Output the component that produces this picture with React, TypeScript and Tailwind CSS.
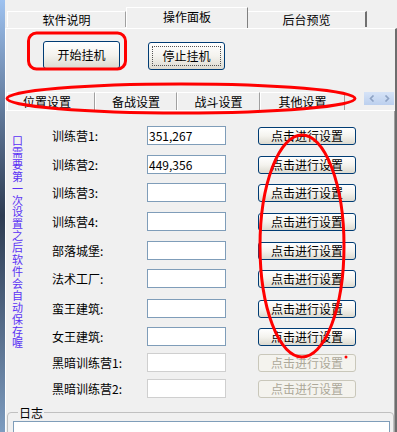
import React from 'react';

const rows = [
  { label: '训练营1:', value: '351,267', h: 'h-[29px]', on: true },
  { label: '训练营2:', value: '449,356', h: 'h-[28px]', on: true },
  { label: '训练营3:', value: '', h: 'h-[29px]', on: true },
  { label: '训练营4:', value: '', h: 'h-[29px]', on: true },
  { label: '部落城堡:', value: '', h: 'h-[28px]', on: true },
  { label: '法术工厂:', value: '', h: 'h-[30px]', on: true },
  { label: '蛮王建筑:', value: '', h: 'h-[28px]', on: true },
  { label: '女王建筑:', value: '', h: 'h-[26px]', on: true },
  { label: '黑暗训练营1:', value: '', h: 'h-[26px]', on: false },
  { label: '黑暗训练营2:', value: '', h: 'h-[26px]', on: false },
];

const innerTabs = [
  { name: '位置设置', w: 'w-[88px]', pad: 'pr-[8px]' },
  { name: '备战设置', w: 'w-[82px]', pad: '' },
  { name: '战斗设置', w: 'w-[83px]', pad: '' },
  { name: '其他设置', w: 'w-[85px]', pad: '' },
];

const xpButton =
  'flex items-center justify-center rounded-[3px] border border-[#003c74] bg-gradient-to-b from-white via-[#f4f3ee] to-[#dcdad0] text-[12px] text-black';

export default function App() {
  return (
    <div className="relative flex h-[432px] w-[397px] overflow-hidden bg-[#f0f0f0] font-['Noto_Sans_CJK_SC',sans-serif] text-[12px] text-black">
      {/* desktop edge behind the window */}
      <div className="w-[5px] shrink-0 bg-gradient-to-b from-[#9ec2f0] via-[#2e3c52] to-[#7d9cc0]" />

      <div className="flex min-h-0 flex-1 flex-col">
        {/* top tabs */}
        <div className="flex h-[28px] shrink-0 items-end pl-[2px]">
          <div className="mb-[1px] flex h-[16px] w-[119px] items-center justify-center border-l border-t border-r border-l-white border-t-white border-r-[#a0a0a0] leading-none">
            软件说明
          </div>
          <div className="relative z-10 flex h-[21px] w-[122px] items-center justify-center border-l border-t border-r border-l-white border-t-white border-r-[#808080] bg-[#f0f0f0] pb-[3px] leading-none">
            操作面板
          </div>
          <div className="mb-[1px] flex h-[16px] w-[119px] items-center justify-center border-t border-r-2 border-t-white border-r-[#707070] leading-none">
            后台预览
          </div>
        </div>

        {/* panel */}
        <div className="flex shrink-0 flex-col border-l border-t border-r-2 border-l-white border-t-white border-r-[#6d6d6d]">
          <div className="flex shrink-0 gap-[28px] pl-[37px] pt-[12px]">
            <button className={`${xpButton} h-[28px] w-[77px]`}>开始挂机</button>
            <button className={`${xpButton} mt-[1px] h-[28px] w-[77px] p-[3px]`}>
              <span className="flex h-full w-full items-center justify-center border border-dotted border-[#555]">停止挂机</span>
            </button>
          </div>

          {/* inner tabs */}
          <div className="mt-[22px] flex h-[19px] shrink-0 items-start border-b border-b-white pl-[1px]">
            {innerTabs.map((t) => (
              <div
                key={t.name}
                className={`${t.w} ${t.pad} flex h-[18px] items-center justify-center border-l border-t border-r border-l-white border-t-white border-r-[#a0a0a0] leading-none`}
              >
                {t.name}
              </div>
            ))}
            <div className="ml-[19px] flex h-[13px]">
              <div className="flex w-[15px] items-center justify-center bg-gradient-to-b from-[#d6e3f7] to-[#bcd0ee]">
                <svg width="6" height="7" viewBox="0 0 6 7">
                  <path d="M4.5 0.5 L1.5 3.5 L4.5 6.5" fill="none" stroke="#8ea3c4" strokeWidth="1.6" />
                </svg>
              </div>
              <div className="flex w-[15px] items-center justify-center bg-gradient-to-b from-[#d6e3f7] to-[#bcd0ee]">
                <svg width="6" height="7" viewBox="0 0 6 7">
                  <path d="M1.5 0.5 L4.5 3.5 L1.5 6.5" fill="none" stroke="#8ea3c4" strokeWidth="1.6" />
                </svg>
              </div>
            </div>
          </div>

          {/* settings content */}
          <div className="flex shrink-0 flex-col border-r border-r-[#a0a0a0]">
            <div className="flex shrink-0 pt-[15px]">
              <div className="ml-[6px] mt-[9px] w-[12px] break-all text-[11px] leading-[11.9px] text-[#5b32f5]">
                口需要第一次设置之后软件会自动保存喔
              </div>
              <div className="ml-[28px] flex flex-col">
                {rows.map((r) => (
                  <div key={r.label} className={`${r.h} flex shrink-0 items-start`}>
                    <div className="w-[95px] text-[12px] leading-[19px]">{r.label}</div>
                    <div
                      className={`flex h-[19px] w-[79px] items-center border bg-white pl-[1px] text-[12px] leading-none ${
                        r.on ? 'border-[#7f9db9]' : 'border-[#cfcfcf]'
                      }`}
                    >
                      {r.value}
                    </div>
                    {r.on ? (
                      <button className={`${xpButton} ml-[32px] mt-[1px] h-[18px] w-[98px] leading-none`}>点击进行设置</button>
                    ) : (
                      <button className="ml-[32px] mt-[1px] flex h-[18px] w-[98px] items-center justify-center rounded-[3px] border border-[#c9c7ba] bg-[#f4f3ee] text-[12px] leading-none text-[#aca899]">
                        点击进行设置
                      </button>
                    )}
                  </div>
                ))}
              </div>
            </div>

            {/* log group */}
            <fieldset className="ml-[1px] h-[60px] shrink-0 rounded-[4px] border border-[#c0c0c0] pl-[5px] pr-[3px]">
              <legend className="ml-[5px] px-[1px] text-[12px] leading-[15px]">日志</legend>
              <div className="mt-[1px] h-[30px] border border-[#7f9db9] bg-white" />
            </fieldset>
          </div>
        </div>
      </div>

      {/* red annotation marks */}
      <svg className="pointer-events-none absolute left-0 top-0" width="397" height="432" viewBox="0 0 397 432">
        <rect x="28.5" y="33" width="97" height="36" rx="8" fill="none" stroke="#ff0000" strokeWidth="3" />
        <ellipse cx="181" cy="98.5" rx="174" ry="14.5" fill="none" stroke="#ff0000" strokeWidth="3" />
        <ellipse cx="302" cy="246" rx="42" ry="111" fill="none" stroke="#ff0000" strokeWidth="3" />
        <circle cx="346" cy="357" r="1.5" fill="#ff0000" />
      </svg>
    </div>
  );
}
